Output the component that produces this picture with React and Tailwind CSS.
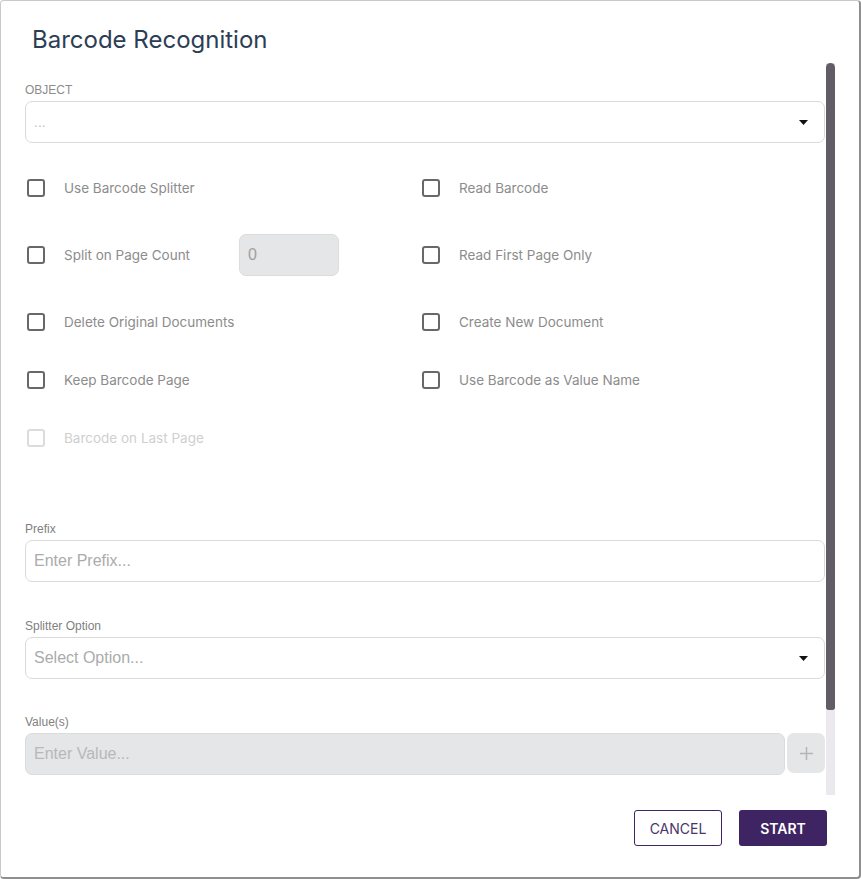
import React from "react";

const inter = "font-['Inter','Noto_Sans',sans-serif]";
const arial = "font-['Liberation_Sans',Arial,sans-serif]";

function Caret() {
  return (
    <svg width="9" height="5" viewBox="0 0 9 5" className="shrink-0">
      <path d="M0 0 L9 0 L4.5 5 Z" fill="#111" />
    </svg>
  );
}

function Check({ label, disabled }) {
  return (
    <div className="flex items-center h-full">
      <span
        className={`w-[18px] h-[18px] shrink-0 rounded-[3px] border-2 ml-[2px] ${
          disabled ? "border-[#dcdcdc]" : "border-[#686868]"
        }`}
      />
      <span
        className={`${inter} ml-[19px] text-[13.5px] whitespace-nowrap ${
          disabled ? "text-[#cfcfcf]" : "text-[#8c8c8c]"
        }`}
      >
        {label}
      </span>
    </div>
  );
}

const row = "grid grid-cols-[395px_1fr]";

export default function App() {
  return (
    <div className="w-[861px] h-[879px] bg-white rounded-[4px] border border-t-[#c9c9c9] border-l-[#c9c9c9] border-r-[#8f8f8f] border-b-[#8f8f8f] border-r-2 border-b-2 flex flex-col">
      <div className={`${inter} text-[24px] leading-[32px] text-[#2c3e55] pl-[31px] pt-[23px] h-[62px]`}>
        Barcode Recognition
      </div>
      <div className="flex h-[732px] pl-[24px]">
        <div className="w-[800px] flex flex-col">
          <div className={`${arial} text-[12px] leading-[16px] text-[#8c8c8c] mt-[19px] mb-[3px]`}>
            OBJECT
          </div>
          <div className="h-[42px] rounded-[7px] border border-[#dadada] flex items-center pl-[8px] pr-[16px]">
            <span className={`${arial} text-[14px] text-[#c4c4c4] flex-1`}>...</span>
            <Caret />
          </div>

          <div className={`${row} mt-[24px]`}>
            <div className="h-[42px]">
              <Check label="Use Barcode Splitter" />
            </div>
            <div className="h-[42px]">
              <Check label="Read Barcode" />
            </div>
          </div>
          <div className={`${row} mt-[25px]`}>
            <div className="h-[42px] flex items-center">
              <Check label="Split on Page Count" />
              <div className="ml-auto mr-[81px] w-[100px] h-[42px] rounded-[7px] bg-[#e5e6e8] border border-[#dcdcdc] flex items-center pl-[8px]">
                <span className={`${arial} text-[16px] text-[#a0a0a0]`}>0</span>
              </div>
            </div>
            <div className="h-[42px]">
              <Check label="Read First Page Only" />
            </div>
          </div>
          <div className={`${row} mt-[25px]`}>
            <div className="h-[42px]">
              <Check label="Delete Original Documents" />
            </div>
            <div className="h-[42px]">
              <Check label="Create New Document" />
            </div>
          </div>
          <div className={`${row} mt-[16px]`}>
            <div className="h-[42px]">
              <Check label="Keep Barcode Page" />
            </div>
            <div className="h-[42px]">
              <Check label="Use Barcode as Value Name" />
            </div>
          </div>
          <div className={`${row} mt-[16px]`}>
            <div className="h-[42px]">
              <Check label="Barcode on Last Page" disabled />
            </div>
          </div>

          <div className={`${arial} text-[12px] leading-[16px] text-[#7f7f7f] mt-[62px] mb-[3px]`}>
            Prefix
          </div>
          <div className="h-[42px] rounded-[7px] border border-[#dadada] flex items-center pl-[8px]">
            <span className={`${arial} text-[16px] text-[#ababab]`}>Enter Prefix...</span>
          </div>

          <div className={`${arial} text-[12px] leading-[16px] text-[#7f7f7f] mt-[36px] mb-[3px]`}>
            Splitter Option
          </div>
          <div className="h-[42px] rounded-[7px] border border-[#dadada] flex items-center pl-[8px] pr-[16px]">
            <span className={`${arial} text-[16px] text-[#ababab] flex-1`}>Select Option...</span>
            <Caret />
          </div>

          <div className={`${arial} text-[12px] leading-[16px] text-[#7f7f7f] mt-[35px] mb-[3px]`}>
            Value(s)
          </div>
          <div className="flex gap-[2px]">
            <div className="w-[760px] h-[42px] rounded-[7px] bg-[#e5e6e8] border border-[#dcdcdc] flex items-center pl-[8px]">
              <span className={`${arial} text-[16px] text-[#b8b8b8]`}>Enter Value...</span>
            </div>
            <div className="w-[38px] h-[40px] rounded-[7px] bg-[#e5e6e8] flex items-center justify-center">
              <svg width="15" height="15" viewBox="0 0 15 15">
                <path d="M7.5 1 V14 M1 7.5 H14" stroke="#b5b5b5" strokeWidth="1.5" />
              </svg>
            </div>
          </div>
        </div>
        <div className="w-[9px] ml-[1px] bg-[#ebe9ee] flex flex-col">
          <div className="h-[647px] bg-[#625c67] rounded-t-[5px] rounded-b-[3px]" />
        </div>
      </div>
      <div className="flex justify-end gap-[17px] pr-[32px] mt-[15px]">
        <button className={`${inter} w-[88px] h-[36px] rounded-[3px] border border-[#3f2561] text-[#4a3568] text-[14px] bg-white`}>
          CANCEL
        </button>
        <button className={`${inter} w-[88px] h-[36px] rounded-[3px] bg-[#3e2462] text-white text-[14px] font-semibold`}>
          START
        </button>
      </div>
    </div>
  );
}
